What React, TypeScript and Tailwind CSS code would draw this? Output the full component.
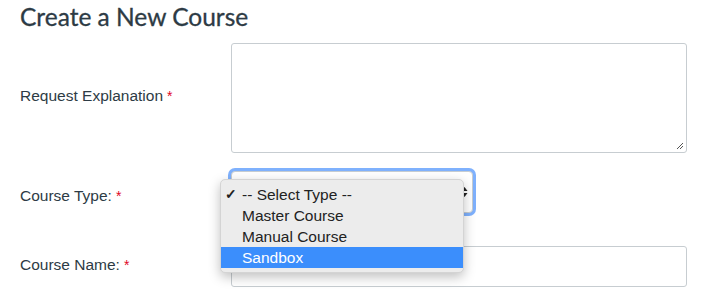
import React from 'react';

const Required = () => <span className="text-[#e0061f] ml-[4px] text-[14px]">*</span>;

const options = ['-- Select Type --', 'Master Course', 'Manual Course', 'Sandbox'];

const App: React.FC = () => {
  return (
    <div className="w-[710px] h-[299px] bg-white overflow-hidden text-[#2d3b45] font-['Liberation_Sans',Arial,sans-serif]">
      <h1 className="font-['Lato',sans-serif] text-[24.5px] leading-[28px] pl-[20px] pt-[3px] text-[#2d3b45] [-webkit-text-stroke:0.3px_#2d3b45]">
        Create a New Course
      </h1>

      <div className="flex flex-col mt-[12px] gap-[18px]">
        {/* Request explanation */}
        <div className="flex items-center">
          <label className="w-[231px] pl-[20px] text-[15.5px] pb-[4px]">
            Request Explanation
            <Required />
          </label>
          <div className="relative w-[456px] h-[110px] border border-[#c7cdd1] rounded-[3px] bg-white">
            <svg className="absolute right-[2px] bottom-[2px]" width="8" height="8" viewBox="0 0 8 8">
              <path d="M1 7 L7 1 M4 7 L7 4" stroke="#555" strokeWidth="1" />
            </svg>
          </div>
        </div>

        {/* Course type */}
        <div className="flex items-center">
          <label className="w-[231px] pl-[20px] text-[15.5px] pt-[8px]">
            Course Type:
            <Required />
          </label>
          <div className="relative">
            <div className="w-[242px] h-[42px] rounded-[4px] border border-[#c7cdd1] bg-white shadow-[0_0_0_3px_#7fb1fd] flex items-center justify-end pr-[4px]">
              <svg width="7" height="12" viewBox="0 0 7 12">
                <path d="M0.5 5 L3.5 1 L6.5 5 Z M0.5 7 L3.5 11 L6.5 7 Z" fill="#222" />
              </svg>
            </div>
            <div className="absolute left-[-11px] top-[8px] w-[244px] rounded-[5px] bg-[#ececec] border border-[#d4d4d4] shadow-[0_4px_12px_rgba(0,0,0,0.25)] py-[4px] font-['Helvetica_Neue','Liberation_Sans',Arial,sans-serif] text-[15.5px] text-[#222]">
              {options.map((opt, i) => (
                <div
                  key={opt}
                  className={
                    'h-[21px] leading-[21px] flex items-center ' +
                    (i === 3 ? 'bg-[#3b8efc] text-white' : '')
                  }
                >
                  <span className="w-[21px] pl-[4px] text-[14px] font-bold">{i === 0 ? '✓' : ''}</span>
                  <span className="-mt-[1px]">{opt}</span>
                </div>
              ))}
            </div>
          </div>
        </div>

        {/* Course name */}
        <div className="flex items-center mt-[15px]">
          <label className="w-[231px] pl-[20px] text-[15.5px] pb-[4px]">
            Course Name:
            <Required />
          </label>
          <div className="w-[456px] h-[41px] border border-[#c7cdd1] rounded-[3px] bg-white" />
        </div>
      </div>
    </div>
  );
};

export default App;
